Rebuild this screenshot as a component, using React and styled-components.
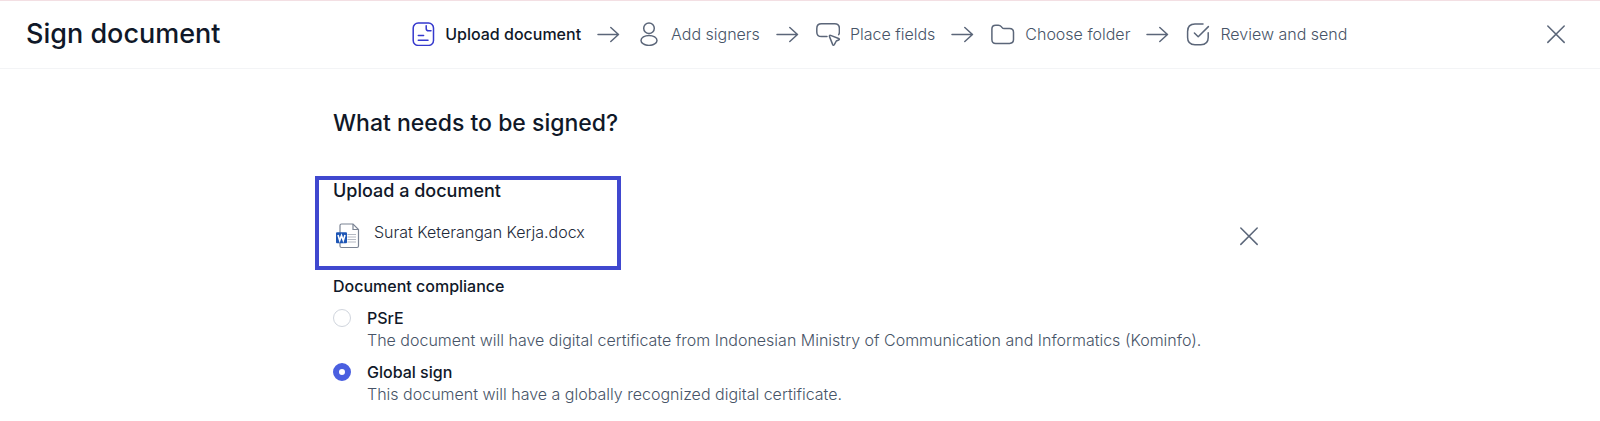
import React, { useState } from "react";
import styled, { createGlobalStyle } from "styled-components";

const GlobalStyle = createGlobalStyle`
  *, *::before, *::after { box-sizing: border-box; }
  body {
    margin: 0;
    background: #ffffff;
    color: #101828;
    font-family: Inter, "Liberation Sans", sans-serif;
    font-size: 16px;
    line-height: 24px;
  }
`;

const Header = styled.header`
  display: flex;
  align-items: center;
  justify-content: space-between;
  min-height: 69px;
  padding: 0 26px 1px;
  border-top: 1px solid #f3dfe3;
  border-bottom: 1px solid #f3f4f6;
`;

const PageTitle = styled.h1`
  margin: 0;
  font-size: 27px;
  line-height: 32px;
  font-weight: 500;
`;

const Steps = styled.ol`
  display: flex;
  align-items: center;
  gap: 16px;
  margin: 0;
  padding: 0;
  list-style: none;
`;

const Step = styled.li`
  display: flex;
  align-items: center;
  gap: 16px;
  color: #5b6679;
`;

const StepLabel = styled.span`
  display: flex;
  align-items: center;
  gap: 10px;
  white-space: nowrap;
  font-weight: ${(p) => (p.$active ? 500 : 300)};
  color: ${(p) => (p.$active ? "#101828" : "#475467")};

  svg { color: ${(p) => (p.$active ? "#3538cd" : "#5b6679")}; }
`;

const Icon = styled.svg`
  flex: none;
  display: block;
  width: 24px;
  height: 24px;
  fill: none;
  stroke: currentColor;
  stroke-width: 1.5;
  stroke-linecap: round;
  stroke-linejoin: round;
`;

const IconButton = styled.button`
  display: grid;
  place-items: center;
  width: 36px;
  height: 36px;
  padding: 0;
  border: 0;
  background: none;
  color: #5b6679;
  cursor: pointer;
`;

const Main = styled.main`
  max-width: 934px;
  margin: 0 auto;
  padding: 38px 0 12px;
`;

const Heading = styled.h2`
  margin: 0 0 40px;
  font-size: 23px;
  line-height: 32px;
  font-weight: 500;
`;

const UploadSection = styled.section`
  position: relative;
  margin-bottom: 22px;
`;

const Highlight = styled.div`
  position: absolute;
  top: -3px;
  left: -18px;
  width: 306px;
  height: 94px;
  border: 4px solid #4048cf;
  pointer-events: none;
`;

const SectionTitle = styled.h3`
  margin: 0 0 17px;
  font-size: 18px;
  line-height: 24px;
  font-weight: 500;
`;

const FileRow = styled.div`
  display: flex;
  align-items: center;
  height: 32px;
  padding-left: 2px;
`;

const FileName = styled.span`
  flex: 1;
  padding: 0 0 8px 14px;
  font-weight: 300;
  color: #1d2939;
`;

const FileIcon = styled.svg`
  flex: none;
  display: block;
  width: 25px;
  height: 26px;
`;

const Options = styled.fieldset`
  display: grid;
  gap: 10px;
  margin: 0;
  padding: 0;
  border: 0;
`;

const Legend = styled.legend`
  padding: 0 0 9px;
  font-weight: 500;
`;

const Option = styled.div`
  display: grid;
  grid-template-columns: 18px 1fr;
  column-gap: 16px;
  align-items: center;
  line-height: 22px;
`;

const Radio = styled.input`
  appearance: none;
  width: 18px;
  height: 18px;
  margin: 0;
  border: 1px solid #d0d5dd;
  border-radius: 50%;
  background: #ffffff;
  cursor: pointer;

  &:checked { border: 6px solid #4a5fe0; }
`;

const OptionLabel = styled.label`
  font-weight: 500;
  cursor: pointer;
`;

const Description = styled.p`
  grid-column: 2;
  margin: 0;
  font-weight: 300;
  color: #475467;
`;

const CloseIcon = () => (
  <Icon viewBox="0 0 24 24" aria-hidden="true">
    <path d="M3.8 4L20.2 20.4M20.2 4L3.8 20.4" />
  </Icon>
);

const ArrowIcon = () => (
  <Icon viewBox="0 0 24 24" aria-hidden="true">
    <path d="M1 12.5H21.5M13.8 5.5L21.5 12.5L13.8 19.5" />
  </Icon>
);

const steps = [
  {
    name: "Upload document",
    art: (
      <>
        <rect x="2.2" y="1" width="20.3" height="22.4" rx="5" />
        <path d="M15.2 3.8V6.4Q15.2 8.8 17.6 8.8H20M7.3 13.5H12.6M7.3 18.3H17" />
      </>
    ),
  },
  {
    name: "Add signers",
    art: (
      <>
        <circle cx="12" cy="6.2" r="5.3" />
        <ellipse cx="12" cy="18.4" rx="8" ry="5" />
      </>
    ),
  },
  {
    name: "Place fields",
    art: (
      <>
        <path d="M11 14.6H5.5Q.8 14.6 .8 9.9V6.5Q.8 1.8 5.5 1.8H18.7Q23.4 1.8 23.4 6.5V9.9Q23.4 11.6 22.7 12.6" />
        <path d="M14.6 13.4L22.6 16.5Q24.1 17.2 22.6 18L20.3 19L18.3 22.6Q17.3 24 16.6 22.4L13.5 14.6Q13.1 12.8 14.6 13.4Z" />
      </>
    ),
  },
  {
    name: "Choose folder",
    art: (
      <path d="M.9 7Q.9 3.2 4.7 3.2H7.3Q9.2 3.2 10.3 4.6L11.1 5.6Q11.8 6.5 13.1 6.5H18.6Q22.5 6.5 22.5 10.3V17.6Q22.5 21.4 18.6 21.4H4.7Q.9 21.4 .9 17.6Z" />
    ),
  },
  {
    name: "Review and send",
    art: (
      <>
        <path d="M17 2.1H9Q1.6 2.1 1.6 9.5V15.5Q1.6 22.7 9 22.7H14.8Q22.2 22.7 22.2 15.5V10.8" />
        <path d="M8.4 11L12.2 14.8L22.4 4.6" />
      </>
    ),
  },
];

const options = [
  {
    id: "psre",
    label: "PSrE",
    text: "The document will have digital certificate from Indonesian Ministry of Communication and Informatics (Kominfo).",
  },
  {
    id: "global",
    label: "Global sign",
    text: "This document will have a globally recognized digital certificate.",
  },
];

export default function App() {
  const [selected, setSelected] = useState("global");

  return (
    <>
      <GlobalStyle />
      <Header>
        <PageTitle>Sign document</PageTitle>
        <Steps>
          {steps.map((step, i) => (
            <Step key={step.name} aria-current={i === 0 ? "step" : undefined}>
              <StepLabel $active={i === 0}>
                <Icon viewBox="0 0 24 24" aria-hidden="true">{step.art}</Icon>
                {step.name}
              </StepLabel>
              {i < steps.length - 1 && <ArrowIcon />}
            </Step>
          ))}
        </Steps>
        <IconButton type="button" aria-label="Close"><CloseIcon /></IconButton>
      </Header>
      <Main>
        <Heading>What needs to be signed?</Heading>
        <UploadSection>
          <SectionTitle>Upload a document</SectionTitle>
          <FileRow>
            <FileIcon viewBox="0 0 25 26" aria-hidden="true">
              <path d="M6.5 1H18L23.5 6.5V23Q23.5 24.5 22 24.5H6.5Q5 24.5 5 23V2.5Q5 1 6.5 1Z" fill="#fff" stroke="#7b8494" strokeWidth="1.2" />
              <path d="M18 1V6.5H23.5" fill="none" stroke="#7b8494" strokeWidth="1.2" />
              <path d="M12.5 11.5H21M12.5 14H21M12.5 16.5H21M12.5 19H21" stroke="#b5bac4" strokeWidth="1.1" />
              <rect x="1" y="9.3" width="11" height="11" rx="1" fill="#1d55b5" />
              <path d="M3 12L4.7 17.5L6.5 12.5L8.3 17.5L10 12" fill="none" stroke="#fff" strokeWidth="1.6" />
            </FileIcon>
            <FileName>Surat Keterangan Kerja.docx</FileName>
            <IconButton type="button" aria-label="Remove document"><CloseIcon /></IconButton>
          </FileRow>
          <Highlight />
        </UploadSection>
        <Options>
          <Legend>Document compliance</Legend>
          {options.map((o) => (
            <Option key={o.id}>
              <Radio
                type="radio"
                name="compliance"
                id={o.id}
                checked={selected === o.id}
                onChange={() => setSelected(o.id)}
                aria-describedby={`${o.id}-text`}
              />
              <OptionLabel htmlFor={o.id}>{o.label}</OptionLabel>
              <Description id={`${o.id}-text`}>{o.text}</Description>
            </Option>
          ))}
        </Options>
      </Main>
    </>
  );
}
